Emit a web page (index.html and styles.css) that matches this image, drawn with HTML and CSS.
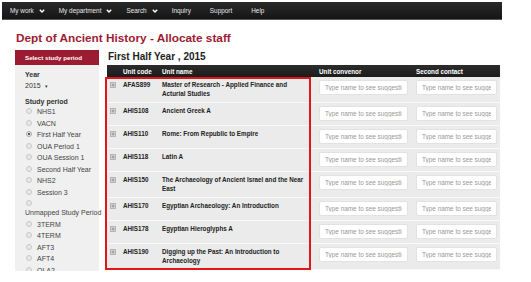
FILE: index.html
```html
<!DOCTYPE html>
<html lang="en">
<head>
    <meta charset="UTF-8">
    <meta name="viewport" content="width=device-width, initial-scale=1.0">
    <title>Allocate staff</title>
    <link rel="stylesheet" href="styles.css">
</head>
<body>

    <div class="topnav">
        <a class="nav-item" href="#">My work <svg class="chevron" viewBox="0 0 6 4"><polyline points="0.8,0.8 3,3 5.2,0.8"/></svg></a>
        <a class="nav-item" href="#">My department <svg class="chevron" viewBox="0 0 6 4"><polyline points="0.8,0.8 3,3 5.2,0.8"/></svg></a>
        <a class="nav-item" href="#">Search <svg class="chevron" viewBox="0 0 6 4"><polyline points="0.8,0.8 3,3 5.2,0.8"/></svg></a>
        <a class="nav-item plain" href="#">Inquiry</a>
        <a class="nav-item plain" href="#">Support</a>
        <a class="nav-item" href="#">Help</a>
    </div>

    <h1 class="title">Dept of Ancient History - Allocate staff</h1>

    <div class="layout">
        <div class="sidebar">
            <div class="sidebar-head">Select study period</div>
            <div class="sidebar-body">
                <div class="field-label">Year</div>
                <div class="year-select">2015 <span class="caret">&#9662;</span></div>

                <div class="field-label period-label">Study period</div>
                <div class="radio"><span class="dot"></span><span class="radio-text">NHS1</span></div>
                <div class="radio"><span class="dot"></span><span class="radio-text">VACN</span></div>
                <div class="radio"><span class="dot checked"></span><span class="radio-text">First Half Year</span></div>
                <div class="radio"><span class="dot"></span><span class="radio-text">OUA Period 1</span></div>
                <div class="radio"><span class="dot"></span><span class="radio-text">OUA Session 1</span></div>
                <div class="radio"><span class="dot"></span><span class="radio-text">Second Half Year</span></div>
                <div class="radio"><span class="dot"></span><span class="radio-text">NHS2</span></div>
                <div class="radio"><span class="dot"></span><span class="radio-text">Session 3</span></div>
                <div class="radio"><span class="dot"></span><span class="radio-text">Unmapped Study Period</span></div>
                <div class="radio"><span class="dot"></span><span class="radio-text">3TERM</span></div>
                <div class="radio"><span class="dot"></span><span class="radio-text">4TERM</span></div>
                <div class="radio"><span class="dot"></span><span class="radio-text">AFT3</span></div>
                <div class="radio"><span class="dot"></span><span class="radio-text">AFT4</span></div>
                <div class="radio"><span class="dot"></span><span class="radio-text">OLA2</span></div>
            </div>
        </div>

        <div class="content">
            <h2>First Half Year , 2015</h2>
            <div class="table-wrap">
                <table class="units">
                    <thead>
                        <tr>
                            <th class="col-icon"></th>
                            <th class="col-code">Unit code</th>
                            <th class="col-name">Unit name</th>
                            <th class="col-conv">Unit convenor</th>
                            <th class="col-second">Second contact</th>
                        </tr>
                    </thead>
                    <tbody id="unitRows"></tbody>
                </table>
                <div class="highlight"></div>
            </div>
        </div>
    </div>

    <script>
        const units = [
            ['AFAS899', 'Master of Research - Applied Finance and Acturial Studies'],
            ['AHIS108', 'Ancient Greek A'],
            ['AHIS110', 'Rome: From Republic to Empire'],
            ['AHIS118', 'Latin A'],
            ['AHIS150', 'The Archaeology of Ancient Israel and the Near East'],
            ['AHIS170', 'Egyptian Archaeology: An Introduction'],
            ['AHIS178', 'Egyptian Hieroglyphs A'],
            ['AHIS190', 'Digging up the Past: An Introduction to Archaeology']
        ];

        const icon = '<svg class="expand" viewBox="0 0 6 6"><rect x="0.5" y="0.5" width="5" height="5" /><path d="M3 1.5v3M1.5 3h3" /></svg>';

        const rows = document.getElementById('unitRows');
        units.forEach(([code, name]) => {
            const tr = document.createElement('tr');
            tr.innerHTML = `
                <td class="col-icon">${icon}</td>
                <td class="col-code">${code}</td>
                <td class="col-name">${name}</td>
                <td class="col-conv"><input type="text" class="conv-input" placeholder="Type name to see suggestions"></td>
                <td class="col-second"><input type="text" class="second-input" placeholder="Type name to see suggestions"></td>
            `;
            rows.appendChild(tr);
        });
    </script>
</body>
</html>
```

FILE: styles.css
```css
/* General Styles */
body {
    font-family: 'Liberation Sans', Arial, sans-serif;
    background-color: #fff;
    color: #222;
    margin: 0;
    padding: 0;
}

/* Top Navigation */
.topnav {
    display: flex;
    align-items: center;
    gap: 14px;
    width: 492px;
    height: 17px;
    margin: 2px 0 0 2px;
    padding-left: 8px;
    background: linear-gradient(#2a2a2a, #151515);
    border-bottom: 1px solid #555;
}

.nav-item {
    display: flex;
    align-items: center;
    color: #e6e6e6;
    text-decoration: none;
    font-size: 6.4px;
}

.nav-item.plain {
    margin-right: 5px;
}

.chevron {
    width: 6px;
    height: 4px;
    margin-left: 5px;
    fill: none;
    stroke: #fff;
    stroke-width: 1.4;
}

/* Page Title */
.title {
    margin: 11px 0 5px 16px;
    font-size: 11.8px;
    line-height: 14px;
    color: #9e1b32;
}

/* Layout */
.layout {
    display: flex;
    gap: 8px;
    height: 221px;
    margin-left: 15px;
    width: 485px;
    overflow: hidden;
}

/* Sidebar */
.sidebar {
    width: 84px;
    flex-shrink: 0;
    background-color: #f0f0f0;
}

.sidebar-head {
    height: 15px;
    line-height: 15px;
    padding-left: 10px;
    background-color: #9b1b30;
    color: #fff;
    font-size: 6.2px;
    font-weight: bold;
}

.sidebar-body {
    padding: 4px 0 0 10px;
    font-size: 7px;
    color: #333;
}

.field-label {
    font-weight: bold;
    line-height: 11px;
}

.period-label {
    margin-top: 4px;
}

.year-select {
    line-height: 11px;
}

.year-select .caret {
    font-size: 5px;
    margin-left: 2px;
}

.radio {
    line-height: 9px;
    margin-bottom: 2.5px;
}

.radio .dot {
    display: inline-block;
    width: 4px;
    height: 4px;
    margin: 0 5px 0 1px;
    border: 1px solid #c8c8c8;
    border-radius: 50%;
    background-color: #e8e8e8;
}

.radio .dot.checked {
    background: radial-gradient(#555 40%, #e8e8e8 55%);
    border-color: #aaa;
}

.radio-text {
    display: inline-block;
    white-space: nowrap;
    color: #444;
}

/* Content */
.content {
    width: 393px;
}

.content h2 {
    margin: 0 0 2px 1px;
    font-size: 10px;
    line-height: 13px;
    color: #222;
}

.table-wrap {
    position: relative;
}

.units {
    width: 393px;
    table-layout: fixed;
    border-collapse: collapse;
    font-size: 6.3px;
}

.units th {
    height: 12px;
    padding-top: 0;
    padding-bottom: 0;
    background: linear-gradient(#2c2c2c, #1c1c1c);
    color: #fff;
    text-align: left;
    font-weight: bold;
}

.units td {
    padding-top: 4px;
    padding-bottom: 4px;
    background-color: #ebebeb;
    border-bottom: 1px solid #f8f8f8;
    vertical-align: top;
    line-height: 8.5px;
    font-weight: bold;
    color: #222;
}

.units .col-icon { width: 10px; padding-left: 3px; padding-right: 0; }
.units .col-code { width: 37px; padding-left: 3px; padding-right: 0; }
.units .col-name { width: 143px; padding-left: 2px; padding-right: 6px; }
.units .col-conv { width: 93px; padding-left: 8px; padding-right: 0; }
.units .col-second { width: 84px; padding-left: 4px; padding-right: 0; }

.units td.col-conv,
.units td.col-second {
    padding-top: 3px;
    padding-bottom: 4px;
}

.expand {
    width: 6px;
    height: 6px;
    margin-top: 1px;
}

.expand rect {
    fill: #d6d6d6;
    stroke: #aaa;
    stroke-width: 0.8;
}

.expand path {
    stroke: #888;
    stroke-width: 0.8;
}

/* Suggestion inputs */
.units input {
    box-sizing: border-box;
    height: 15px;
    padding: 0 5px;
    border: 1px solid #e2e2e2;
    border-radius: 2px;
    background-color: #fff;
    font-family: 'Liberation Sans', Arial, sans-serif;
    font-size: 6.4px;
}

.units input::placeholder {
    color: #999;
}

.conv-input {
    width: 89px;
}

.second-input {
    width: 81px;
}

/* Highlight outline */
.highlight {
    position: absolute;
    top: 12px;
    left: -2px;
    width: 206px;
    height: 193px;
    border: 2px solid #e0161b;
    box-sizing: border-box;
    pointer-events: none;
}
```
